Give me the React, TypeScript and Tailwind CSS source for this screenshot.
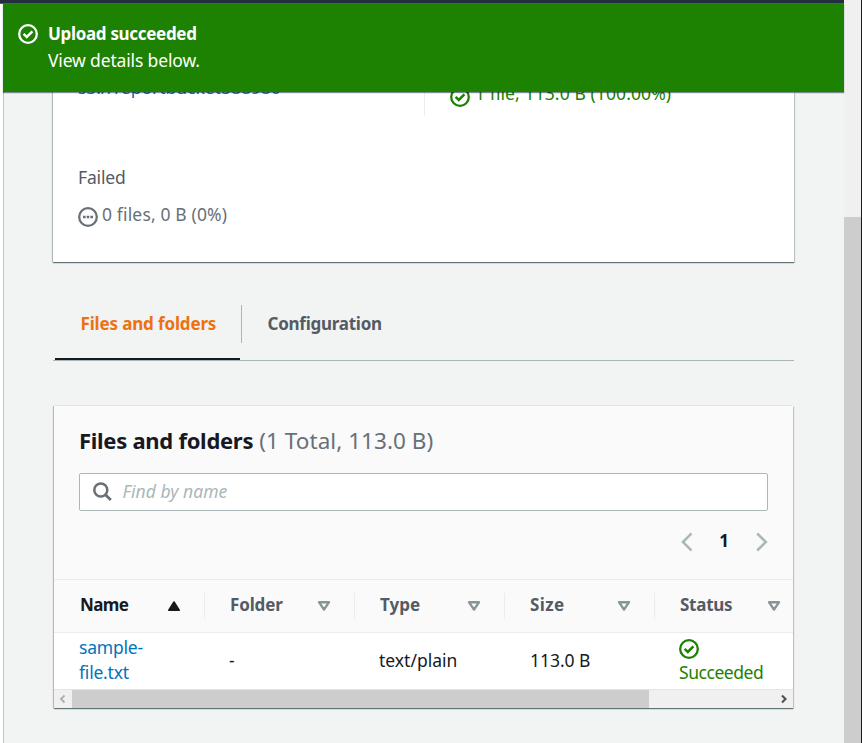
import type { ReactNode } from 'react';

function CheckCircle({ className = '' }: { className?: string }) {
  return (
    <svg viewBox="0 0 20 20" className={`size-5 shrink-0 ${className}`} fill="none" stroke="currentColor">
      <circle cx="10" cy="10" r="8.8" strokeWidth="2.3" />
      <path d="M5.6 9.8 8.8 12.9 14.4 7.3" strokeWidth="2.5" />
    </svg>
  );
}

function PendingCircle() {
  return (
    <svg viewBox="0 0 20 20" className="size-5 shrink-0 text-[#687078]" fill="none" stroke="currentColor">
      <circle cx="10" cy="10" r="8.8" strokeWidth="2.3" />
      <path d="M5 10h2.6M8.7 10h2.6M12.4 10H15" strokeWidth="2.4" />
    </svg>
  );
}

function SortIcon({ active }: { active?: boolean }) {
  return active ? (
    <svg viewBox="0 0 14 12" className="h-3 w-3.5" fill="#16191f" stroke="#16191f" strokeLinejoin="round">
      <path d="M7 2 12.2 10.2H1.8Z" strokeWidth="1.6" />
    </svg>
  ) : (
    <svg viewBox="0 0 14 12" className="h-3 w-3.5" fill="none" stroke="#879596" strokeLinejoin="round">
      <path d="M2 2.2H12L7 9.6Z" strokeWidth="2.4" />
    </svg>
  );
}

const columns = [
  { label: 'Name', tracking: 'tracking-[-0.6px]', active: true },
  { label: 'Folder', tracking: 'tracking-[-0.15px]' },
  { label: 'Type', tracking: 'tracking-[0px]' },
  { label: 'Size', tracking: 'tracking-[0.4px]' },
  { label: 'Status', tracking: 'tracking-[-0.25px]' },
];

function Cell({ children }: { children: ReactNode }) {
  return <div className="flex w-[150px] shrink-0 flex-col justify-center pl-[25px]">{children}</div>;
}

export default function App() {
  return (
    <div className="flex h-[743px] w-[862px] overflow-hidden bg-white font-['Noto_Sans','Open_Sans',sans-serif] text-[17.5px] leading-6 text-[#16191f]">
      <div className="flex w-[844px] flex-col">
        <div className="h-1 shrink-0 border-b border-[#545b64] bg-[#232f3e]" />
        <div className="ml-[3px] flex min-h-0 flex-1 flex-col">
          <div className="relative z-10 flex h-[88px] shrink-0 gap-2.5 bg-[#1d8102] pt-4 pl-[15px] text-white shadow-[0_1px_1px_rgba(0,28,36,0.5)]">
            <CheckCircle className="mt-1" />
            <div className="leading-[27px]">
              <div className="text-[17px] font-bold tracking-[-0.32px]">Upload succeeded</div>
              <div className="tracking-[-0.15px]">View details below.</div>
            </div>
          </div>

          <main className="min-h-0 flex-1 border-l border-[#bfc5c6] bg-[#f2f3f3] pr-[50px] pl-[49px]">
            <section className="h-[170px] bg-white px-[25px] shadow-[0_1px_1px_rgba(0,28,36,0.5),1px_1px_1px_rgba(0,28,36,0.15),-1px_0_1px_rgba(0,28,36,0.2)]">
              <div className="relative -top-[17px] -mb-[17px] flex h-[41px]">
                <div className="w-[346px] tracking-[-0.02px] text-[#0073bb]">s3://reportbucket588980</div>
                <div className="flex border-l border-[#eaeded] pt-1.5 pl-[25px] text-[#1d8102]">
                  <CheckCircle className="mt-1.5" />
                  <span className="ml-[5px] tracking-[0.1px]">1 file, 113.0 B (100.00%)</span>
                </div>
              </div>
              <div className="pt-[49px] tracking-[-0.15px] text-[#545b64]">Failed</div>
              <div className="mt-[13px] flex text-[#687078]">
                <span className="mt-[5px]">
                  <PendingCircle />
                </span>
                <span className="ml-1 tracking-[0.15px]">0 files, 0 B (0%)</span>
              </div>
            </section>

            <nav className="mt-[43px] flex h-14 border-b border-[#aab7b8] text-[17px] font-bold">
              <div className="-mb-px ml-0.5 flex h-[55px] w-[185px] border-b-2 border-[#16191f] pt-[7px] pl-[25.5px] tracking-[-0.15px] text-[#ec7211]">
                Files and folders
              </div>
              <div className="ml-px h-[38px] border-l border-[#aab7b8] pt-[7px] pl-[25.5px] tracking-[-0.25px] text-[#545b64]">
                Configuration
              </div>
            </nav>

            <section className="mt-[45px] ml-px h-[302px] w-[739px] overflow-hidden bg-white shadow-[0_1px_1px_rgba(0,28,36,0.5),1px_1px_1px_rgba(0,28,36,0.15),-1px_0_1px_rgba(0,28,36,0.2),0_-1px_0_#eaeded]">
              <div className="flex h-[174px] flex-col border-b border-[#eaeded] bg-[#fafafa] pr-[25px] pl-[25px]">
                <h2 className="mt-[19px] text-[22px] leading-[30px] font-bold">
                  <span className="tracking-[-0.28px]">Files and folders</span>
                  <span className="ml-1.5 text-[22.5px] font-normal tracking-[0.05px] text-[#687078]">
                    (1 Total, 113.0 B)
                  </span>
                </h2>
                <div className="mt-[17px] flex h-[38px] w-[689px] items-center rounded-xs border border-[#aab7b8] bg-white pl-[13px]">
                  <svg viewBox="0 0 20 20" className="size-5" fill="none" stroke="#687078" strokeWidth="2.5">
                    <circle cx="7.8" cy="8" r="6.5" />
                    <path d="m12.5 12.7 5.3 5.3" strokeWidth="2.8" />
                  </svg>
                  <span className="-mt-0.5 ml-[9.5px] tracking-[0.05px] text-[#aab7b8] italic">Find by name</span>
                </div>
                <div className="mt-[17px] flex items-start justify-end gap-[27px]">
                  <svg viewBox="0 0 12 20" className="mt-1 h-5 w-3" fill="none" stroke="#aab7b8" strokeWidth="2.5">
                    <path d="m11.6 1.5-8.7 8.5 8.7 8.5" />
                  </svg>
                  <span className="mt-px w-2.5 text-center text-[17px] font-bold">1</span>
                  <svg viewBox="0 0 12 20" className="mt-1 h-5 w-3" fill="none" stroke="#aab7b8" strokeWidth="2.5">
                    <path d="m1.2 1.5 8.7 8.5-8.7 8.5" />
                  </svg>
                </div>
              </div>

              <div className="flex h-[53px] border-b border-[#eaeded] bg-[#fafafa] pt-[13px]">
                {columns.map((c, i) => (
                  <div
                    key={c.label}
                    className={`flex h-[26px] w-[150px] shrink-0 items-center justify-between pr-[23px] text-[17px] font-bold ${
                      i === 0 ? 'pl-[26px]' : 'border-l border-[#eaeded] pl-[25px]'
                    } ${c.active ? '' : 'text-[#545b64]'}`}
                  >
                    <span className={`-mt-0.5 ${c.tracking}`}>{c.label}</span>
                    <SortIcon active={c.active} />
                  </div>
                ))}
              </div>

              <div className="flex h-14 pb-0.5 leading-[25px]">
                <Cell>
                  <span className="tracking-[-0.2px] text-[#0073bb]">
                    sample-
                    <br />
                    file.txt
                  </span>
                </Cell>
                <Cell>-</Cell>
                <Cell>
                  <span>text/plain</span>
                </Cell>
                <Cell>
                  <span className="pl-px tracking-[-0.05px]">113.0 B</span>
                </Cell>
                <Cell>
                  <CheckCircle className="mt-1 mb-px text-[#1d8102]" />
                  <span className="tracking-[-0.45px] text-[#1d8102]">Succeeded</span>
                </Cell>
              </div>

              <div className="flex h-[19px] border-t border-[#e4e6e6] bg-[#f0f0f0]">
                <svg viewBox="0 0 18 18" className="size-[18px]" fill="none" stroke="#b0b0b0" strokeWidth="1.9">
                  <path d="M10.5 5.5 7 9l3.5 3.5" />
                </svg>
                <div className="w-[577px] bg-[#cdcdcd]" />
                <svg viewBox="0 0 18 18" className="ml-auto size-[18px]" fill="none" stroke="#505050" strokeWidth="2.1">
                  <path d="M7 5.5 10.5 9 7 12.5" />
                </svg>
              </div>
            </section>
          </main>
        </div>
      </div>
      <div className="w-[17px] bg-[#f0f0f0] pt-[217px]">
        <div className="h-full bg-[#cdcdcd]" />
      </div>
      <div className="w-px bg-[#1c1c1c]" />
    </div>
  );
}
